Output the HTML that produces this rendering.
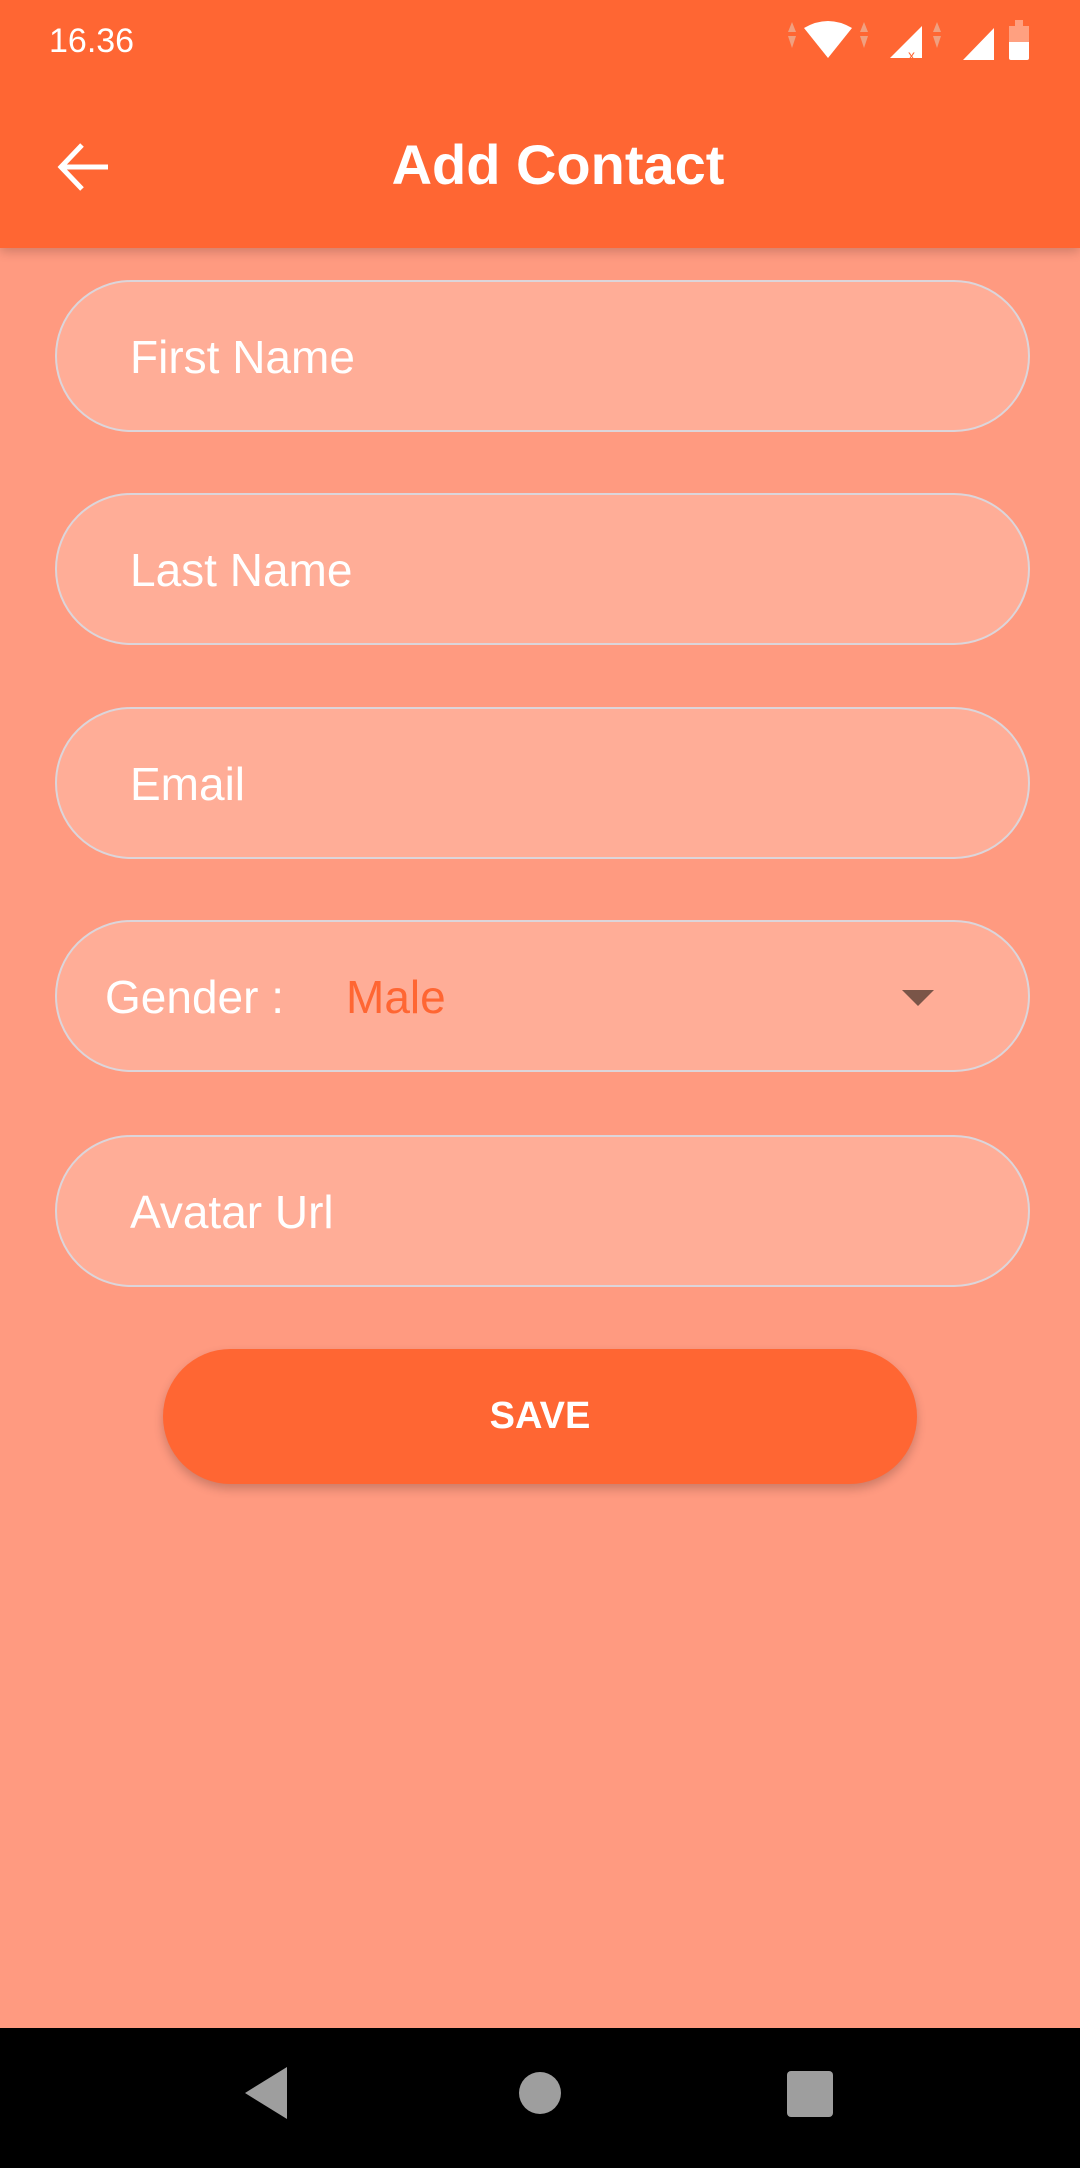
<!DOCTYPE html>
<html><head><meta charset="utf-8"><style>
*{margin:0;padding:0;box-sizing:border-box}
body{width:1080px;height:2160px;background:#ff9a80;font-family:"Liberation Sans",sans-serif;position:relative;overflow:hidden}
.bar{position:absolute;left:0;top:0;width:1080px;height:248px;background:#ff6633;box-shadow:0 4px 10px rgba(0,0,0,.18)}
.time{position:absolute;left:49px;top:22px;color:#fff;font-size:34px}
.title{position:absolute;left:0;width:1116px;top:132px;text-align:center;color:#fff;font-size:56px;font-weight:bold}
.f{position:absolute;left:55px;width:975px;height:152px;border-radius:76px;background:#ffad97;border:2px solid #dcd5da}
.f span{position:absolute;left:73px;top:48px;color:#fff;font-size:46px}
.save{position:absolute;left:163px;top:1349px;width:754px;height:135px;border-radius:68px;background:#ff6633;box-shadow:0 5px 10px rgba(0,0,0,.2);color:#fff;font-weight:bold;font-size:38px;text-align:center;line-height:135px}
.nav{position:absolute;left:0;top:2028px;width:1080px;height:140px;background:#000}
</style></head><body>
<div class="bar">
<div class="time">16.36</div>
<svg style="position:absolute;left:780px;top:18px" width="260" height="48" viewBox="0 0 260 48">
<g fill="#f0a080"><polygon points="12,4 16,14 8,14"/><polygon points="8,18 16,18 12,30"/><polygon points="84,4 88,14 80,14"/><polygon points="80,18 88,18 84,30"/><polygon points="157,4 161,14 153,14"/><polygon points="153,18 161,18 157,30"/></g>
<path d="M24,10 Q48,-4 72,10 L48,40 Z" fill="#fff"/>
<polygon points="110,40 142,8 142,40" fill="#fff"/>
<text x="128" y="42" fill="#ff6633" font-size="14" font-family="Liberation Sans">x</text>
<polygon points="183,42 214,10 214,42" fill="#fff"/>
<rect x="229" y="8" width="20" height="34" rx="2" fill="#fff"/><rect x="229" y="8" width="20" height="16" fill="#ffa080"/><rect x="235" y="2" width="8" height="6" fill="#ffa080"/>
</svg>
<svg style="position:absolute;left:56px;top:142px" width="56" height="50" viewBox="0 0 56 50"><path d="M52,25 H6 M26,3 L5,25 L26,47" stroke="#fff" stroke-width="5" fill="none"/></svg>
<div class="title">Add Contact</div>
</div>
<div class="f" style="top:280px"><span>First Name</span></div>
<div class="f" style="top:493px"><span>Last Name</span></div>
<div class="f" style="top:707px"><span>Email</span></div>
<div class="f" style="top:920px"><span style="left:48px">Gender :</span><span style="left:289px;color:#ff6633">Male</span>
<svg style="position:absolute;left:845px;top:68px" width="32" height="16"><polygon points="0,0 32,0 16,16" fill="#7a5548"/></svg></div>
<div class="f" style="top:1135px"><span>Avatar Url</span></div>
<div class="save">SAVE</div>
<div class="nav">
<svg width="1080" height="132"><polygon points="245,65 287,39 287,91" fill="#9e9e9e"/><circle cx="540" cy="65" r="21" fill="#9e9e9e"/><rect x="787" y="43" width="46" height="46" rx="4" fill="#9e9e9e"/></svg>
</div>
</body></html>
